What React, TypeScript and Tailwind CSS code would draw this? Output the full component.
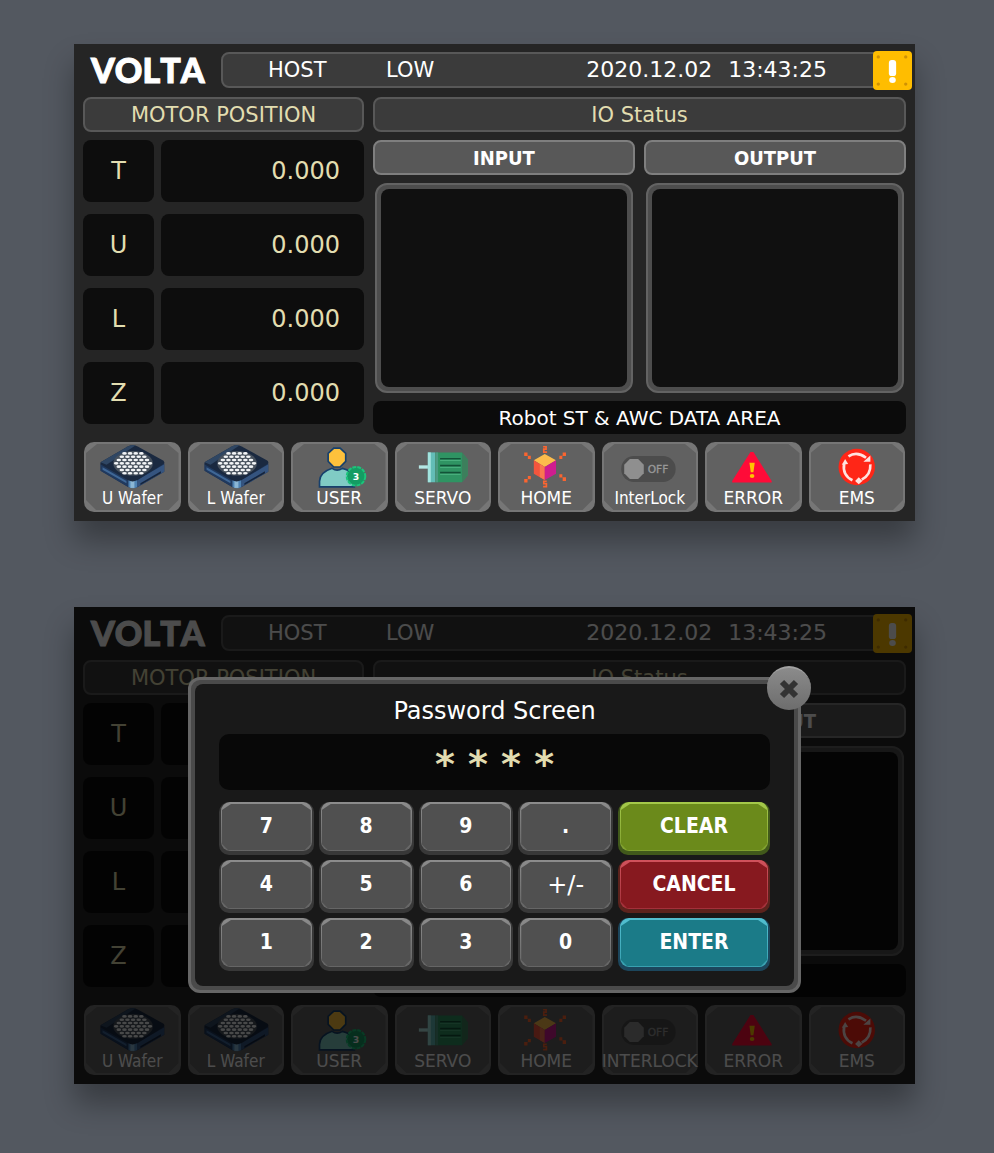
import type { ReactNode } from "react";

const sans = "font-['DejaVu_Sans','Noto_Sans',sans-serif]";
const condensed =
  "font-['DejaVu_Sans_Condensed','DejaVu_Sans','Noto_Sans',sans-serif]";

const axes = [
  { name: "T", value: "0.000" },
  { name: "U", value: "0.000" },
  { name: "L", value: "0.000" },
  { name: "Z", value: "0.000" },
];

// staggered openings of the wafer chuck, kept inside an ellipse
const waferDots: { x: number; y: number }[] = [];
for (let row = -3; row <= 3; row++) {
  for (let col = -4; col <= 4; col++) {
    const x = col * 17 + (row % 2 ? 8 : 0);
    const y = row * 10;
    if ((x * x) / (56 * 56) + (y * y) / (34 * 34) <= 1) {
      waferDots.push({ x: 178 + x, y: 100 + y });
    }
  }
}

function Drawing({ x, children }: { x: number; children: ReactNode }) {
  return (
    <svg
      className="block h-[46px] w-full overflow-visible"
      viewBox={`${x} 39 291 138`}
      aria-hidden="true"
    >
      {children}
    </svg>
  );
}

function WaferIcon() {
  return (
    <Drawing x={30}>
      <path
        d="M80 100 L80 122 L163 171 Q177 178 192 171 L272 125 L272 96 Z"
        fill="#1d3252"
      />
      <path d="M80 102 L164 150 L164 171 L80 122 Z" fill="#20395e" />
      <path d="M86 112 L158 153 L158 160 L86 119 Z" fill="#3f6796" />
      <path d="M190 151 L272 103 L272 125 L190 172 Z" fill="#35547f" />
      <path d="M200 160 L262 124 L262 130 L200 165 Z" fill="#15243c" />
      <path d="M164 150 L190 150 L190 172 Q177 178 164 171 Z" fill="#4f83b4" />
      <path d="M170 152 L182 152 L182 174 L170 174 Z" fill="#8bb7d6" />
      <path
        d="M80 97 L162 49 Q177 42 192 49 L270 92 Q274 96 270 101 L190 151 Q177 158 163 151 L80 103 Z"
        fill="#1a2940"
      />
      <path d="M80 97 L162 49 Q177 42 185 46 L98 104 Z" fill="#2f4663" />
      <ellipse cx="178" cy="100" rx="60" ry="37" fill="#46505c" />
      {waferDots.map((dot) => (
        <ellipse
          key={`${dot.x}-${dot.y}`}
          cx={dot.x}
          cy={dot.y}
          rx="7"
          ry="4"
          fill="#f2f4f6"
        />
      ))}
    </Drawing>
  );
}

function UserIcon() {
  return (
    <Drawing x={22}>
      <path
        d="M108 171 V154 Q109 127 146 115 Q161 126 177 115 Q205 121 213 146 V171 Z"
        fill="#80cbc4"
        stroke="#17406c"
        strokeWidth="5"
      />
      <path
        d="M151 54 H170 L187 70 V94 L170 111 H151 L134 94 V70 Z"
        fill="#fdc13c"
        stroke="#17406c"
        strokeWidth="5"
      />
      <circle cx="218" cy="139" r="27" fill="#149c63" />
      <circle
        cx="218"
        cy="139"
        r="28"
        fill="none"
        stroke="#1bc57b"
        strokeWidth="6"
        strokeDasharray="12 3"
      />
      <text
        x="218"
        y="149"
        textAnchor="middle"
        fontSize="28"
        fontWeight="700"
        fill="#fff"
      >
        3
      </text>
    </Drawing>
  );
}

function ServoIcon() {
  return (
    <Drawing x={332}>
      <rect x="404" y="106" width="28" height="10" fill="#b5e7e4" />
      <path d="M454 67 H534 L551 88 V137 L534 157 H454 Z" fill="#2f9463" />
      <path d="M534 67 L551 88 V137 L534 157 Z" fill="#3c7f5c" />
      <rect x="454" y="67" width="8" height="90" fill="#4d9a83" />
      <rect x="431" y="67" width="22" height="90" fill="#63bdb7" />
      <rect x="431" y="67" width="9" height="90" fill="#a2e3de" />
      <path
        d="M468 86 H530 M468 107 H530 M468 128 H530"
        stroke="#135238"
        strokeWidth="5"
      />
      <path
        d="M468 91 H530 M468 112 H530 M468 133 H530"
        stroke="#4fb583"
        strokeWidth="3"
      />
    </Drawing>
  );
}

function HomeIcon() {
  return (
    <Drawing x={12}>
      <path d="M153 72 L187 91 L153 111 L120 91 Z" fill="#fcbc4c" />
      <path d="M120 91 L153 111 V150 L120 131 Z" fill="#f4553d" />
      <path d="M138 102 L153 111 V150 L138 141 Z" fill="#fa7650" />
      <path d="M187 91 L153 111 V150 L187 131 Z" fill="#cf1d8f" />
      <path
        d="M148 50 H157 V57 H150 V66 H160 M159 154 H150 V161 H158 V170 H148"
        fill="none"
        stroke="#fb6530"
        strokeWidth="5"
      />
      <path
        d="M91 67 h10 v10 h10 v10 h-9 v-9 h-11 Z M217 67 h-10 v10 h-10 v10 h9 v-9 h11 Z M91 158 h10 v-10 h10 v-10 h-9 v9 h-11 Z M217 153 h-10 v-10 h-10 v-10 h9 v9 h11 Z"
        fill="#fb6530"
      />
    </Drawing>
  );
}

function InterlockIcon() {
  return (
    <Drawing x={322}>
      <rect x="380" y="78" width="164" height="78" rx="38" fill="#4c4c4c" />
      <path
        d="M406 87 H431 L448 104 V130 L431 147 H406 L389 130 V104 Z"
        fill="#8f8f8f"
      />
      <text
        x="491"
        y="129"
        textAnchor="middle"
        fontSize="32"
        fill="#989898"
        stroke="#989898"
      >
        OFF
      </text>
    </Drawing>
  );
}

function ErrorIcon() {
  return (
    <Drawing x={14}>
      <path d="M151 66 H160 L215 153 V158 H96 V153 Z" fill="#ff0b38" />
      <path d="M148 98 H164 L160 127 H152 Z" fill="#ffc400" />
      <ellipse cx="156" cy="138" rx="7" ry="6" fill="#ffc400" />
    </Drawing>
  );
}

function EmsIcon() {
  return (
    <Drawing x={324}>
      <circle cx="468" cy="111" r="55" fill="#ff2617" />
      <g fill="none" stroke="#ffe3e0" strokeWidth="8">
        <path d="M443 79 Q468 62 496 83" />
        <path d="M509 103 Q511 134 483 149" />
        <path d="M455 151 Q424 136 430 101" />
      </g>
      <g fill="#ffe3e0">
        <path d="M509 76 V95 H488 Z" />
        <path d="M474 142 L485 153 L474 163 L463 153 Z" />
        <path d="M433 87 L442 102 L423 104 Z" />
      </g>
    </Drawing>
  );
}

function NavButton({
  label,
  narrow,
  children,
}: {
  label: string;
  narrow?: boolean;
  children: ReactNode;
}) {
  return (
    <button
      type="button"
      className="isolate grid h-[70px] min-w-0 grid-cols-1 rounded-[10px] bg-[#767676]"
    >
      <span className="m-[2px] bg-[#616161] [grid-area:1/1] [clip-path:polygon(11px_0,calc(100%-11px)_0,100%_9px,100%_calc(100%-10px),calc(100%-10px)_100%,10px_100%,0_calc(100%-10px),0_9px)]" />
      <span className="z-10 flex min-w-0 flex-col pt-px [grid-area:1/1]">
        {children}
        <span
          className={`flex justify-center whitespace-nowrap text-[17px] leading-[18px] text-white ${
            narrow ? condensed : sans
          }`}
        >
          {label}
        </span>
      </span>
    </button>
  );
}

function Header() {
  return (
    <header className="flex h-9 items-center">
      <div className="w-[138px] pl-2 font-['Lato',sans-serif] text-[34px] font-black leading-9 text-white [font-kerning:none] [-webkit-text-stroke:1px_#fff]">
        VOLTA
      </div>
      <div className="flex h-9 flex-1 items-center rounded-lg border-2 border-[#585858] bg-[#3b3b3b] text-[21px] leading-8 text-white">
        <span className="w-[163px] pl-[45px]">HOST</span>
        <span>LOW</span>
        <time className="ml-auto flex gap-4 pr-[46px] text-[22px] leading-8">
          <span>2020.12.02</span>
          <span>13:43:25</span>
        </time>
        <button
          type="button"
          aria-label="Alarm"
          className="-mr-2 h-[39px] w-[39px] rounded bg-[#ffbd00]"
        >
          <svg viewBox="698 32 118 118" className="block h-full w-full">
            <rect x="746" y="59" width="22" height="49" rx="9" fill="#fff" />
            <ellipse cx="757" cy="120" rx="10" ry="9" fill="#fff" />
            <g fill="#cf9104">
              <circle cx="714" cy="50" r="5" />
              <circle cx="797" cy="50" r="5" />
              <circle cx="714" cy="132" r="5" />
              <circle cx="797" cy="132" r="5" />
            </g>
          </svg>
        </button>
      </div>
    </header>
  );
}

function SectionTitle({ children }: { children: ReactNode }) {
  return (
    <h2 className="flex h-[35px] items-center justify-center rounded-lg border-2 border-[#585858] bg-[#3b3b3b] text-[21px] leading-8 text-[#e2ddb0]">
      {children}
    </h2>
  );
}

function IoColumn({ title }: { title: string }) {
  return (
    <section className="flex-1">
      <h3
        className={`flex h-[35px] items-center justify-center rounded-lg border-2 border-[#7f7f7f] bg-[#585858] text-[20px] font-bold leading-[30px] text-white ${condensed}`}
      >
        {title}
      </h3>
      <div className="mx-[2px] mt-2 h-[210px] rounded-xl border-2 border-[#636363] bg-[#4d4d4d] p-1">
        <div className="h-full rounded-lg bg-[#101010]" />
      </div>
    </section>
  );
}

function RobotScreen({
  interlockLabel,
  children,
}: {
  interlockLabel: string;
  children?: ReactNode;
}) {
  return (
    <section
      className={`relative max-w-[841px] bg-[#252525] px-[9px] pt-2 pb-[9px] shadow-[0_20px_28px_rgba(0,0,0,0.32)] ${sans}`}
    >
      <Header />
      <div className="mt-[9px] flex gap-[9px]">
        <section className="w-[281px]">
          <SectionTitle>MOTOR POSITION</SectionTitle>
          <dl className="mt-2 flex flex-col gap-3 text-[24px] text-[#e2ddb0]">
            {axes.map((axis) => (
              <div key={axis.name} className="flex h-[62px] gap-[7px]">
                <dt className="flex w-[71px] items-center justify-center rounded-lg bg-[#0d0d0d]">
                  {axis.name}
                </dt>
                <dd className="flex flex-1 items-center justify-end rounded-lg bg-[#0d0d0d] pr-6">
                  {axis.value}
                </dd>
              </div>
            ))}
          </dl>
        </section>
        <section className="flex-1">
          <SectionTitle>IO Status</SectionTitle>
          <div className="mt-2 flex gap-[9px]">
            <IoColumn title="INPUT" />
            <IoColumn title="OUTPUT" />
          </div>
          <p className="mt-2 flex h-[33px] items-center justify-center rounded-lg bg-[#0b0b0b] text-[20px] text-white">
            Robot ST &amp; AWC DATA AREA
          </p>
        </section>
      </div>
      <nav className="mx-px mt-2 grid grid-cols-8 gap-[7px]">
        <NavButton label="U Wafer" narrow>
          <WaferIcon />
        </NavButton>
        <NavButton label="L Wafer" narrow>
          <WaferIcon />
        </NavButton>
        <NavButton label="USER">
          <UserIcon />
        </NavButton>
        <NavButton label="SERVO">
          <ServoIcon />
        </NavButton>
        <NavButton label="HOME">
          <HomeIcon />
        </NavButton>
        <NavButton
          label={interlockLabel}
          narrow={interlockLabel === "InterLock"}
        >
          <InterlockIcon />
        </NavButton>
        <NavButton label="ERROR">
          <ErrorIcon />
        </NavButton>
        <NavButton label="EMS">
          <EmsIcon />
        </NavButton>
      </nav>
      {children}
    </section>
  );
}

const tones = {
  gray: {
    base: "bg-[#383838]",
    edge: "bg-linear-to-b from-[#8c8c8c] to-[#656565]",
    face: "bg-[#505050]",
  },
  green: {
    base: "bg-[#41591b]",
    edge: "bg-linear-to-b from-[#a5c94a] to-[#7f9f2e]",
    face: "bg-[#6b8a1b]",
  },
  red: {
    base: "bg-[#5c231d]",
    edge: "bg-linear-to-b from-[#d0525c] to-[#a3303a]",
    face: "bg-[#87191f]",
  },
  teal: {
    base: "bg-[#1c465c]",
    edge: "bg-linear-to-b from-[#52bfd0] to-[#38a0b0]",
    face: "bg-[#1b7b88]",
  },
};

const keys: { label: string; tone: keyof typeof tones }[] = [
  { label: "7", tone: "gray" },
  { label: "8", tone: "gray" },
  { label: "9", tone: "gray" },
  { label: ".", tone: "gray" },
  { label: "CLEAR", tone: "green" },
  { label: "4", tone: "gray" },
  { label: "5", tone: "gray" },
  { label: "6", tone: "gray" },
  { label: "+/-", tone: "gray" },
  { label: "CANCEL", tone: "red" },
  { label: "1", tone: "gray" },
  { label: "2", tone: "gray" },
  { label: "3", tone: "gray" },
  { label: "0", tone: "gray" },
  { label: "ENTER", tone: "teal" },
];

function Key({ label, tone }: { label: string; tone: keyof typeof tones }) {
  const { base, edge, face } = tones[tone];
  return (
    <button
      type="button"
      className={`h-[53px] rounded-[10px] px-[2px] pb-1 text-white ${base}`}
    >
      <span
        className={`block h-full rounded-[9px] px-px pt-[2px] pb-px ${edge}`}
      >
        <span
          className={`flex h-full items-center justify-center [clip-path:polygon(9px_0,calc(100%-9px)_0,100%_6px,100%_calc(100%-6px),calc(100%-6px)_100%,6px_100%,0_calc(100%-6px),0_6px)] ${face} ${
            label === "+/-"
              ? "text-[24px]"
              : `text-[21px] font-bold ${condensed}`
          }`}
        >
          {label}
        </span>
      </span>
    </button>
  );
}

function PasswordDialog() {
  return (
    <div className="absolute inset-0 flex items-start justify-center bg-black/70 pt-[70px]">
      <div
        role="dialog"
        aria-labelledby="password-title"
        className="relative w-[613px] rounded-xl border-[3px] border-[#666] bg-[#4a4a4a] p-1"
      >
        <div className="rounded-lg bg-[#191919] px-6 pt-3 pb-[15px]">
          <h2
            id="password-title"
            className="text-center text-[24px] leading-[30px] text-white"
          >
            Password Screen
          </h2>
          <input
            type="text"
            readOnly
            aria-labelledby="password-title"
            value="* * * *"
            className="mt-2 block h-14 w-full rounded-[10px] bg-[#080808] pt-1 text-center text-[38px] font-bold leading-10 text-[#e2ddb0] outline-none"
          />
          <div className="mt-3 grid grid-cols-[1fr_1fr_1fr_1fr_152px] gap-[5px]">
            {keys.map((key) => (
              <Key key={key.label} label={key.label} tone={key.tone} />
            ))}
          </div>
        </div>
        <button
          type="button"
          aria-label="Close"
          className="absolute -top-[14px] -right-[13px] flex h-11 w-11 items-center justify-center rounded-full border-t-2 border-[#a2a2a2] bg-linear-to-b from-[#8b8b8b] to-[#6d6d6d]"
        >
          <svg viewBox="0 0 20 20" className="h-5 w-5" aria-hidden="true">
            <path
              d="M3 3 L17 17 M17 3 L3 17"
              stroke="#333"
              strokeWidth="6"
            />
          </svg>
        </button>
      </div>
    </div>
  );
}

export default function App() {
  return (
    <main className="flex min-h-screen flex-col gap-[86px] bg-[#535860] px-[74px] pt-11 pb-[69px]">
      <RobotScreen interlockLabel="InterLock" />
      <RobotScreen interlockLabel="INTERLOCK">
        <PasswordDialog />
      </RobotScreen>
    </main>
  );
}
